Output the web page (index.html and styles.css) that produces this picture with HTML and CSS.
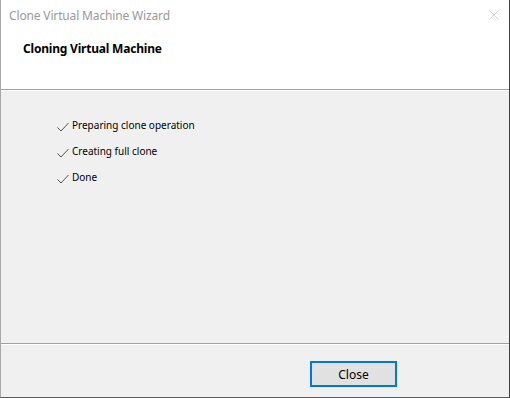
FILE: index.html
```html
<!DOCTYPE html>
<html lang="en">
<head>
    <meta charset="UTF-8">
    <title>Clone Virtual Machine Wizard</title>
    <link rel="stylesheet" href="styles.css">
</head>
<body>
    <div class="window">
        <div class="header">
            <div class="titlebar">
                <span class="title">Clone Virtual Machine Wizard</span>
                <svg class="close-x" width="10" height="10" viewBox="0 0 10 10">
                    <path d="M0.5 0.5 L9.5 9.5 M9.5 0.5 L0.5 9.5" stroke="#d4d4d4" stroke-width="1" fill="none"/>
                </svg>
            </div>
            <h1>Cloning Virtual Machine</h1>
        </div>

        <div class="separator"></div>

        <div class="content">
            <ul class="steps">
                <li>
                    <svg class="check" width="12" height="10" viewBox="0 0 12 10">
                        <path d="M0.5 5.5 L4 9 L11.5 1" stroke="#555" stroke-width="1" fill="none"/>
                    </svg>
                    Preparing clone operation
                </li>
                <li>
                    <svg class="check" width="12" height="10" viewBox="0 0 12 10">
                        <path d="M0.5 5.5 L4 9 L11.5 1" stroke="#555" stroke-width="1" fill="none"/>
                    </svg>
                    Creating full clone
                </li>
                <li>
                    <svg class="check" width="12" height="10" viewBox="0 0 12 10">
                        <path d="M0.5 5.5 L4 9 L11.5 1" stroke="#555" stroke-width="1" fill="none"/>
                    </svg>
                    Done
                </li>
            </ul>
        </div>

        <div class="separator"></div>

        <div class="footer">
            <button type="button" class="close-btn">Close</button>
        </div>
    </div>
</body>
</html>
```

FILE: styles.css
```css
body {
    margin: 0;
    font-family: "Noto Sans", "Open Sans", sans-serif;
    font-size: 12px;
    color: #000;
    background-color: #f0f0f0;
}
.window {
    width: 510px;
    height: 398px;
    box-sizing: border-box;
    display: flex;
    flex-direction: column;
    border-left: 1px solid #a8a8a8;
    border-right: 1px solid #404040;
    border-bottom: 1px solid #5a5a5a;
    background-color: #f0f0f0;
}
.header {
    height: 89px;
    background-color: #fff;
    flex-shrink: 0;
}
.titlebar {
    height: 30px;
    display: flex;
    align-items: center;
    justify-content: space-between;
    padding: 0 10px 0 8px;
}
.title {
    color: #999;
    font-size: 12px;
    letter-spacing: -0.15px;
}
.close-x {
    display: block;
}
h1 {
    margin: 0;
    padding: 10px 0 0 22px;
    font-size: 12px;
    font-weight: bold;
    letter-spacing: -0.2px;
}
.separator {
    height: 1px;
    background-color: #a0a0a0;
    border-bottom: 1px solid #fff;
    flex-shrink: 0;
}
.content {
    flex: 1;
}
.steps {
    list-style: none;
    margin: 0;
    padding: 21px 0 0 56px;
    font-size: 10px;
}
.steps li {
    display: flex;
    align-items: center;
    gap: 3px;
    height: 26px;
}
.check {
    display: block;
    margin-top: 3px;
}
.footer {
    height: 52px;
    flex-shrink: 0;
    padding: 16px 0 0 309px;
    box-sizing: border-box;
}
.close-btn {
    width: 87px;
    height: 26px;
    border: 2px solid #0078d7;
    background-color: #e1e1e1;
    font-family: inherit;
    font-size: 12px;
    color: #000;
    padding: 0;
}
```
